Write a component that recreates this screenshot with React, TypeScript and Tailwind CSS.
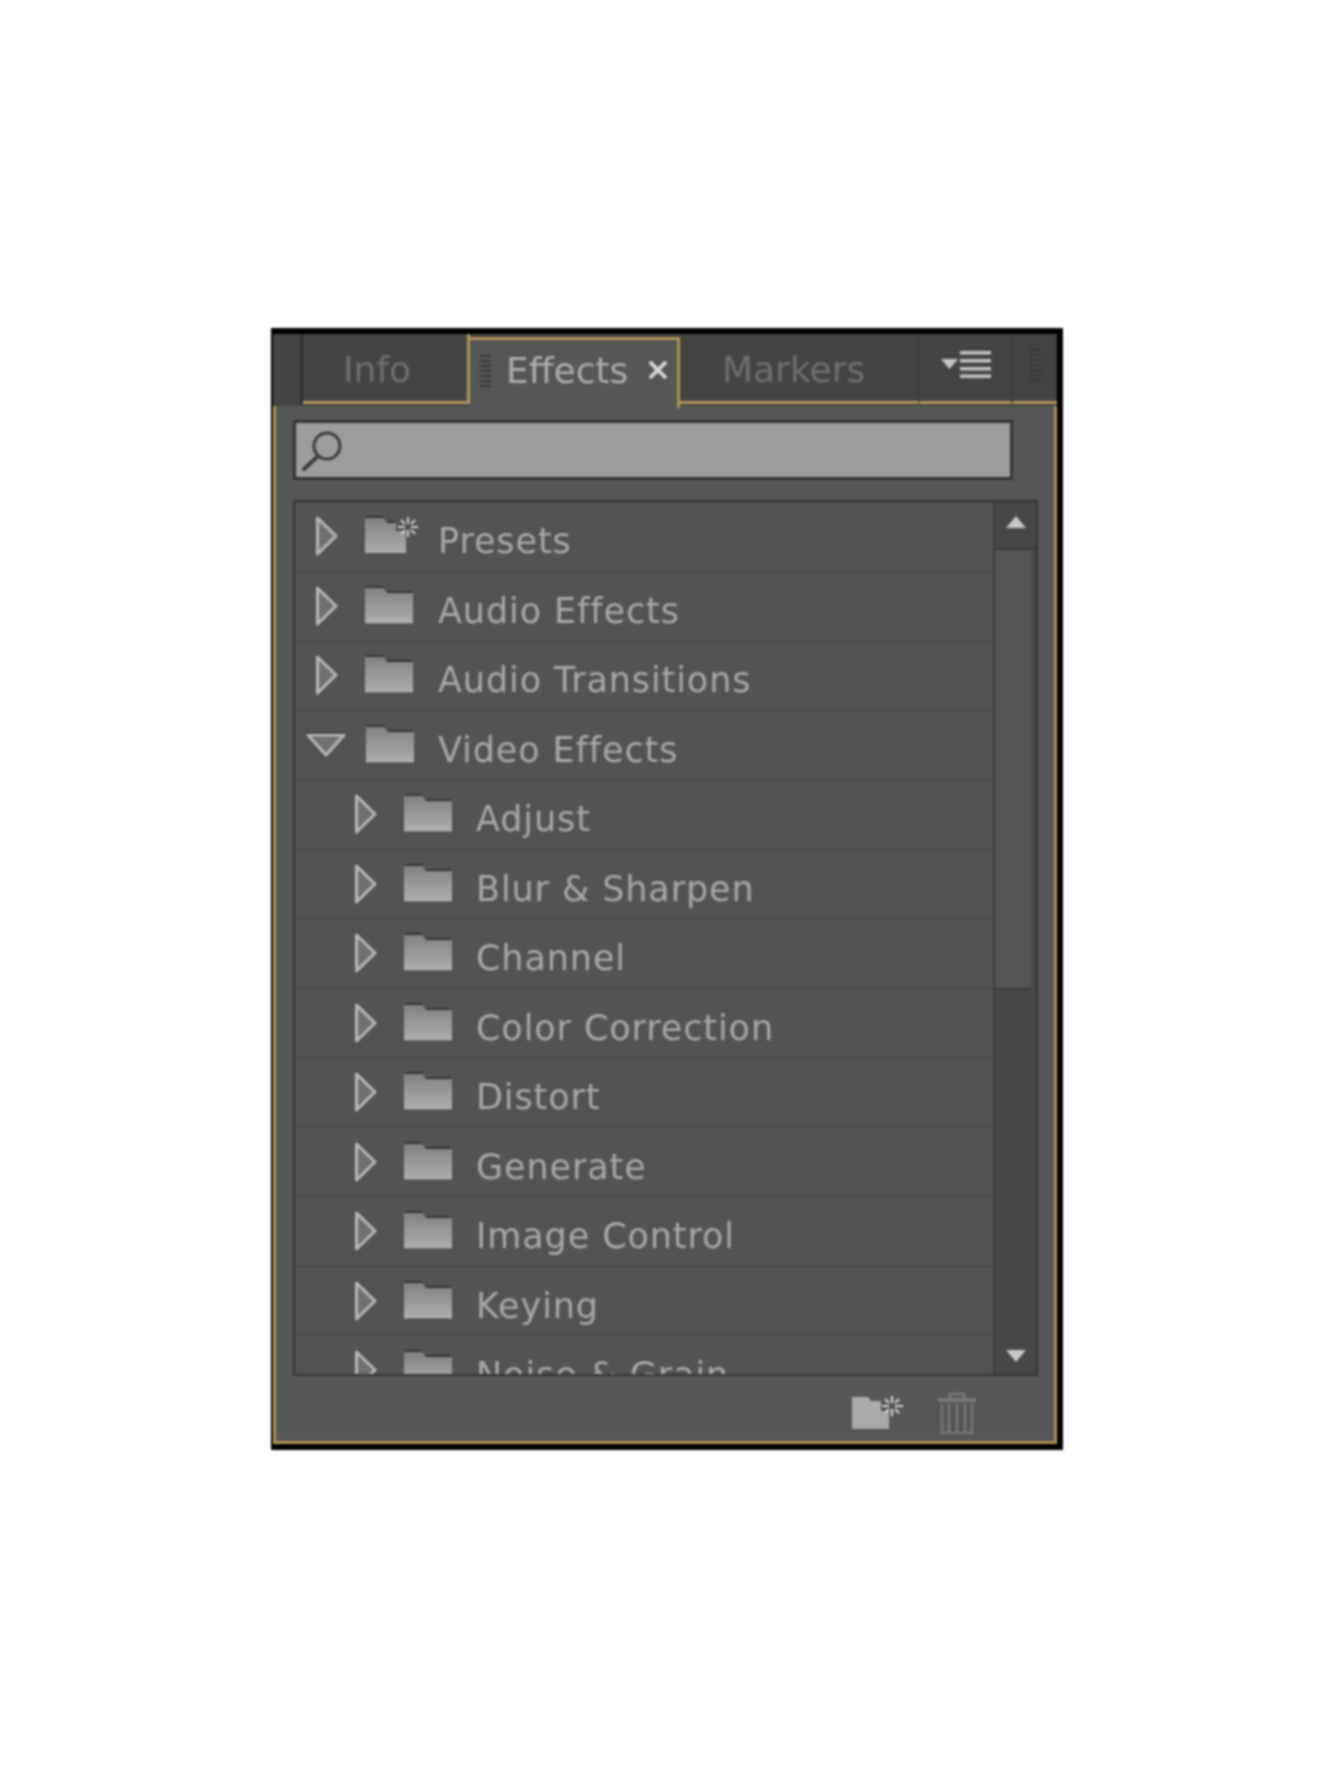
const rows = [
  { name: 'Presets', depth: 0, sparkle: true },
  { name: 'Audio Effects', depth: 0 },
  { name: 'Audio Transitions', depth: 0 },
  { name: 'Video Effects', depth: 0, open: true },
  { name: 'Adjust', depth: 1 },
  { name: 'Blur & Sharpen', depth: 1 },
  { name: 'Channel', depth: 1 },
  { name: 'Color Correction', depth: 1 },
  { name: 'Distort', depth: 1 },
  { name: 'Generate', depth: 1 },
  { name: 'Image Control', depth: 1 },
  { name: 'Keying', depth: 1 },
  { name: 'Noise & Grain', depth: 1 },
]

const Gripper = ({ color = '#2f2f2f' }: { color?: string }) => (
  <div className="flex flex-col gap-[3px] w-[11px]">
    {[0, 1, 2, 3, 4, 5, 6].map((i) => (
      <div key={i} className="h-[2px]" style={{ backgroundColor: color }} />
    ))}
  </div>
)

const Twisty = ({ open }: { open?: boolean }) =>
  open ? (
    <svg className="shrink-0" width="40" height="26" viewBox="0 0 40 26" fill="none">
      <path d="M2 3H38L20 23Z" fill="#707070" stroke="#b8b8b8" strokeWidth="3" strokeLinejoin="round" />
      <path d="M1 1H39" stroke="#3a3a3a" strokeWidth="1.5" />
    </svg>
  ) : (
    <svg className="shrink-0" width="24" height="40" viewBox="0 0 24 40" fill="none">
      <path d="M2.5 2L21 20L2.5 38Z" fill="#707070" stroke="#b8b8b8" strokeWidth="3" strokeLinejoin="round" />
    </svg>
  )

const Folder = ({ sparkle, id }: { sparkle?: boolean; id: string }) => (
  <svg className="shrink-0" width={sparkle ? 56 : 50} height="40" viewBox={sparkle ? '0 0 56 40' : '0 0 50 40'} fill="none">
    <defs>
      <linearGradient id={id} x1="0" y1="0" x2="0" y2="1">
        <stop offset="0" stopColor="#828282" />
        <stop offset="1" stopColor="#acaeae" />
      </linearGradient>
    </defs>
    {sparkle ? (
      <>
        <path d="M1 3H19L23 8H32V16H42V38H1Z" fill={`url(#${id})`} />
        <path d="M2 2H19M23 7H31" stroke="#333333" strokeWidth="2" />
        <path
          d="M44 2V9M44 15V22M34 12H41M47 12H54M37 5L41 9M47 15L51 19M51 5L47 9M41 15L37 19"
          stroke="#cfcfcf"
          strokeWidth="2"
        />
      </>
    ) : (
      <>
        <path d="M1 3H19L23 8H49V38H1Z" fill={`url(#${id})`} />
        <path d="M2 2H19M23 7H48" stroke="#333333" strokeWidth="2" />
        <path d="M1 37.5H49" stroke="#b5b5b5" strokeWidth="1.5" />
      </>
    )}
  </svg>
)

const App = () => {
  return (
    <div className="min-h-[1779px] bg-white pt-[328px] pl-[271px]" style={{ fontFamily: '"DejaVu Sans", sans-serif' }}>
      <div className="w-[792px] h-[1122px] bg-black pt-[6px] pb-[6px] pl-[2px] pr-[6px] blur-[0.8px] flex flex-col">
        {/* Tabs */}
        <div className="h-[72px] flex bg-[#444444] relative z-10">
          <div className="w-[30px] border-r-[3px] border-[#2f2f2f] h-[70px]" />
          <div className="w-[167px] h-[70px] flex items-center pl-[40px] pt-[4px] text-[36px] text-[#6f6f6f] border-r-[3px] border-b-[3px] border-[#b09458]">
            Info
          </div>
          <div className="w-[210px] h-[71px] mt-[3px] bg-[#565656] border-t-[3px] border-r-[3px] border-[#b09458] flex items-center pl-[10px] pb-[6px]">
            <Gripper color="#383838" />
            <span className="ml-[15px] text-[36px] text-[#adadad]">Effects</span>
            <span className="ml-[16px] text-[32px] font-bold leading-none text-[#d8d8d8] pb-[4px]">×</span>
          </div>
          <div className="w-[238px] h-[70px] flex items-center pl-[42px] pt-[4px] text-[36px] text-[#6f6f6f] border-b-[3px] border-[#b09458]">
            Markers
          </div>
          <div className="w-[95px] h-[70px] flex items-center justify-center pb-[6px] border-x-[2px] border-[#3d3d3d] border-b-[3px] border-b-[#b09458]">
            <svg width="50" height="27" viewBox="0 0 50 27" fill="#c4c4c4">
              <path d="M0 8H17L8.5 18Z" />
              <path d="M19 0H50V3.5H19ZM19 8H50V11.5H19ZM19 16H50V19.5H19ZM19 23.5H50V27H19Z" />
            </svg>
          </div>
          <div className="flex-1 h-[70px] flex items-center justify-center pb-[6px] border-b-[3px] border-[#b09458]">
            <Gripper color="#383838" />
          </div>
        </div>

        {/* Panel body */}
        <div className="flex-1 flex flex-col bg-[#565656] border-x-[3px] border-b-[3px] border-[#b09458] pl-[17px] pr-[15px] pt-[14px]">
          <div className="w-[720px] h-[60px] bg-[#9b9d9f] border-[3px] border-[#343434] flex items-center pl-[5px]">
            <svg width="44" height="44" viewBox="0 0 44 44" fill="none" stroke="#3c3c3c">
              <circle cx="26" cy="18" r="13" strokeWidth="3" />
              <path d="M16 29L3 41" strokeWidth="4" strokeLinecap="round" />
            </svg>
          </div>

          <div className="mt-[20px] w-[745px] h-[876px] flex bg-[#535353] border-[2px] border-[#353535] overflow-hidden">
            <div className="flex-1 overflow-hidden">
              {rows.map((row, i) => (
                <div
                  key={row.name}
                  className={`relative h-[69.5px] shrink-0 flex items-center border-b border-[#454545] ${
                    row.depth ? 'pl-[59px]' : row.open ? 'pl-[11px]' : 'pl-[20px]'
                  }`}
                >
                  <div className="w-[24px] flex justify-start">
                    <Twisty open={row.open} />
                  </div>
                  <div className={`flex ${row.open ? 'ml-[35px]' : 'ml-[25px]'} pb-[2px]`}>
                    <Folder id={`folder-${i}`} sparkle={row.sparkle} />
                  </div>
                  <span
                    className={`absolute top-[17px] text-[35px] leading-[44px] text-[#a8a8a8] tracking-[0.9px] whitespace-nowrap ${
                      row.depth ? 'left-[181px]' : 'left-[143px]'
                    }`}
                  >
                    {row.name}
                  </span>
                </div>
              ))}
            </div>
            <div className="w-[43px] shrink-0 bg-[#474747] border-l-[2px] border-[#3f3f3f] flex flex-col">
              <div className="h-[48px] flex items-center justify-center border-b-[2px] border-[#3a3a3a] pb-[6px]">
                <svg width="22" height="14" viewBox="0 0 22 14" fill="#c8c8c8">
                  <path d="M11 1L21 13H1Z" />
                </svg>
              </div>
              <div className="h-[440px] w-[36px] bg-[#555555] border-b-[2px] border-[#3a3a3a]" />
              <div className="flex-1 flex items-end justify-center pb-[11px]">
                <svg width="22" height="14" viewBox="0 0 22 14" fill="#c8c8c8">
                  <path d="M1 1H21L11 13Z" />
                </svg>
              </div>
            </div>
          </div>

          {/* Footer */}
          <div className="flex-1 flex items-center justify-end pr-[62px] gap-[32px] pt-[8px]">
            <svg width="54" height="36" viewBox="0 0 54 36" fill="none">
              <path d="M1 2H17L20 6H30V16H38V34H1Z" fill="#a9abab" />
              <path
                d="M41 1V8M41 14V21M31 11H38M44 11H52M34 4L38 8M44 14L48 18M48 4L44 8M38 14L34 18"
                stroke="#d2d2d2"
                strokeWidth="2.2"
              />
            </svg>
            <svg width="40" height="42" viewBox="0 0 40 42" fill="none" stroke="#777777">
              <path d="M13 6V2H27V6" strokeWidth="2.5" />
              <path d="M1 8H39" strokeWidth="4" />
              <path d="M5 12V41H35V12M12 12V40M20 12V40M28 12V40" strokeWidth="2.5" />
            </svg>
          </div>
        </div>
      </div>
    </div>
  )
}

export default App
